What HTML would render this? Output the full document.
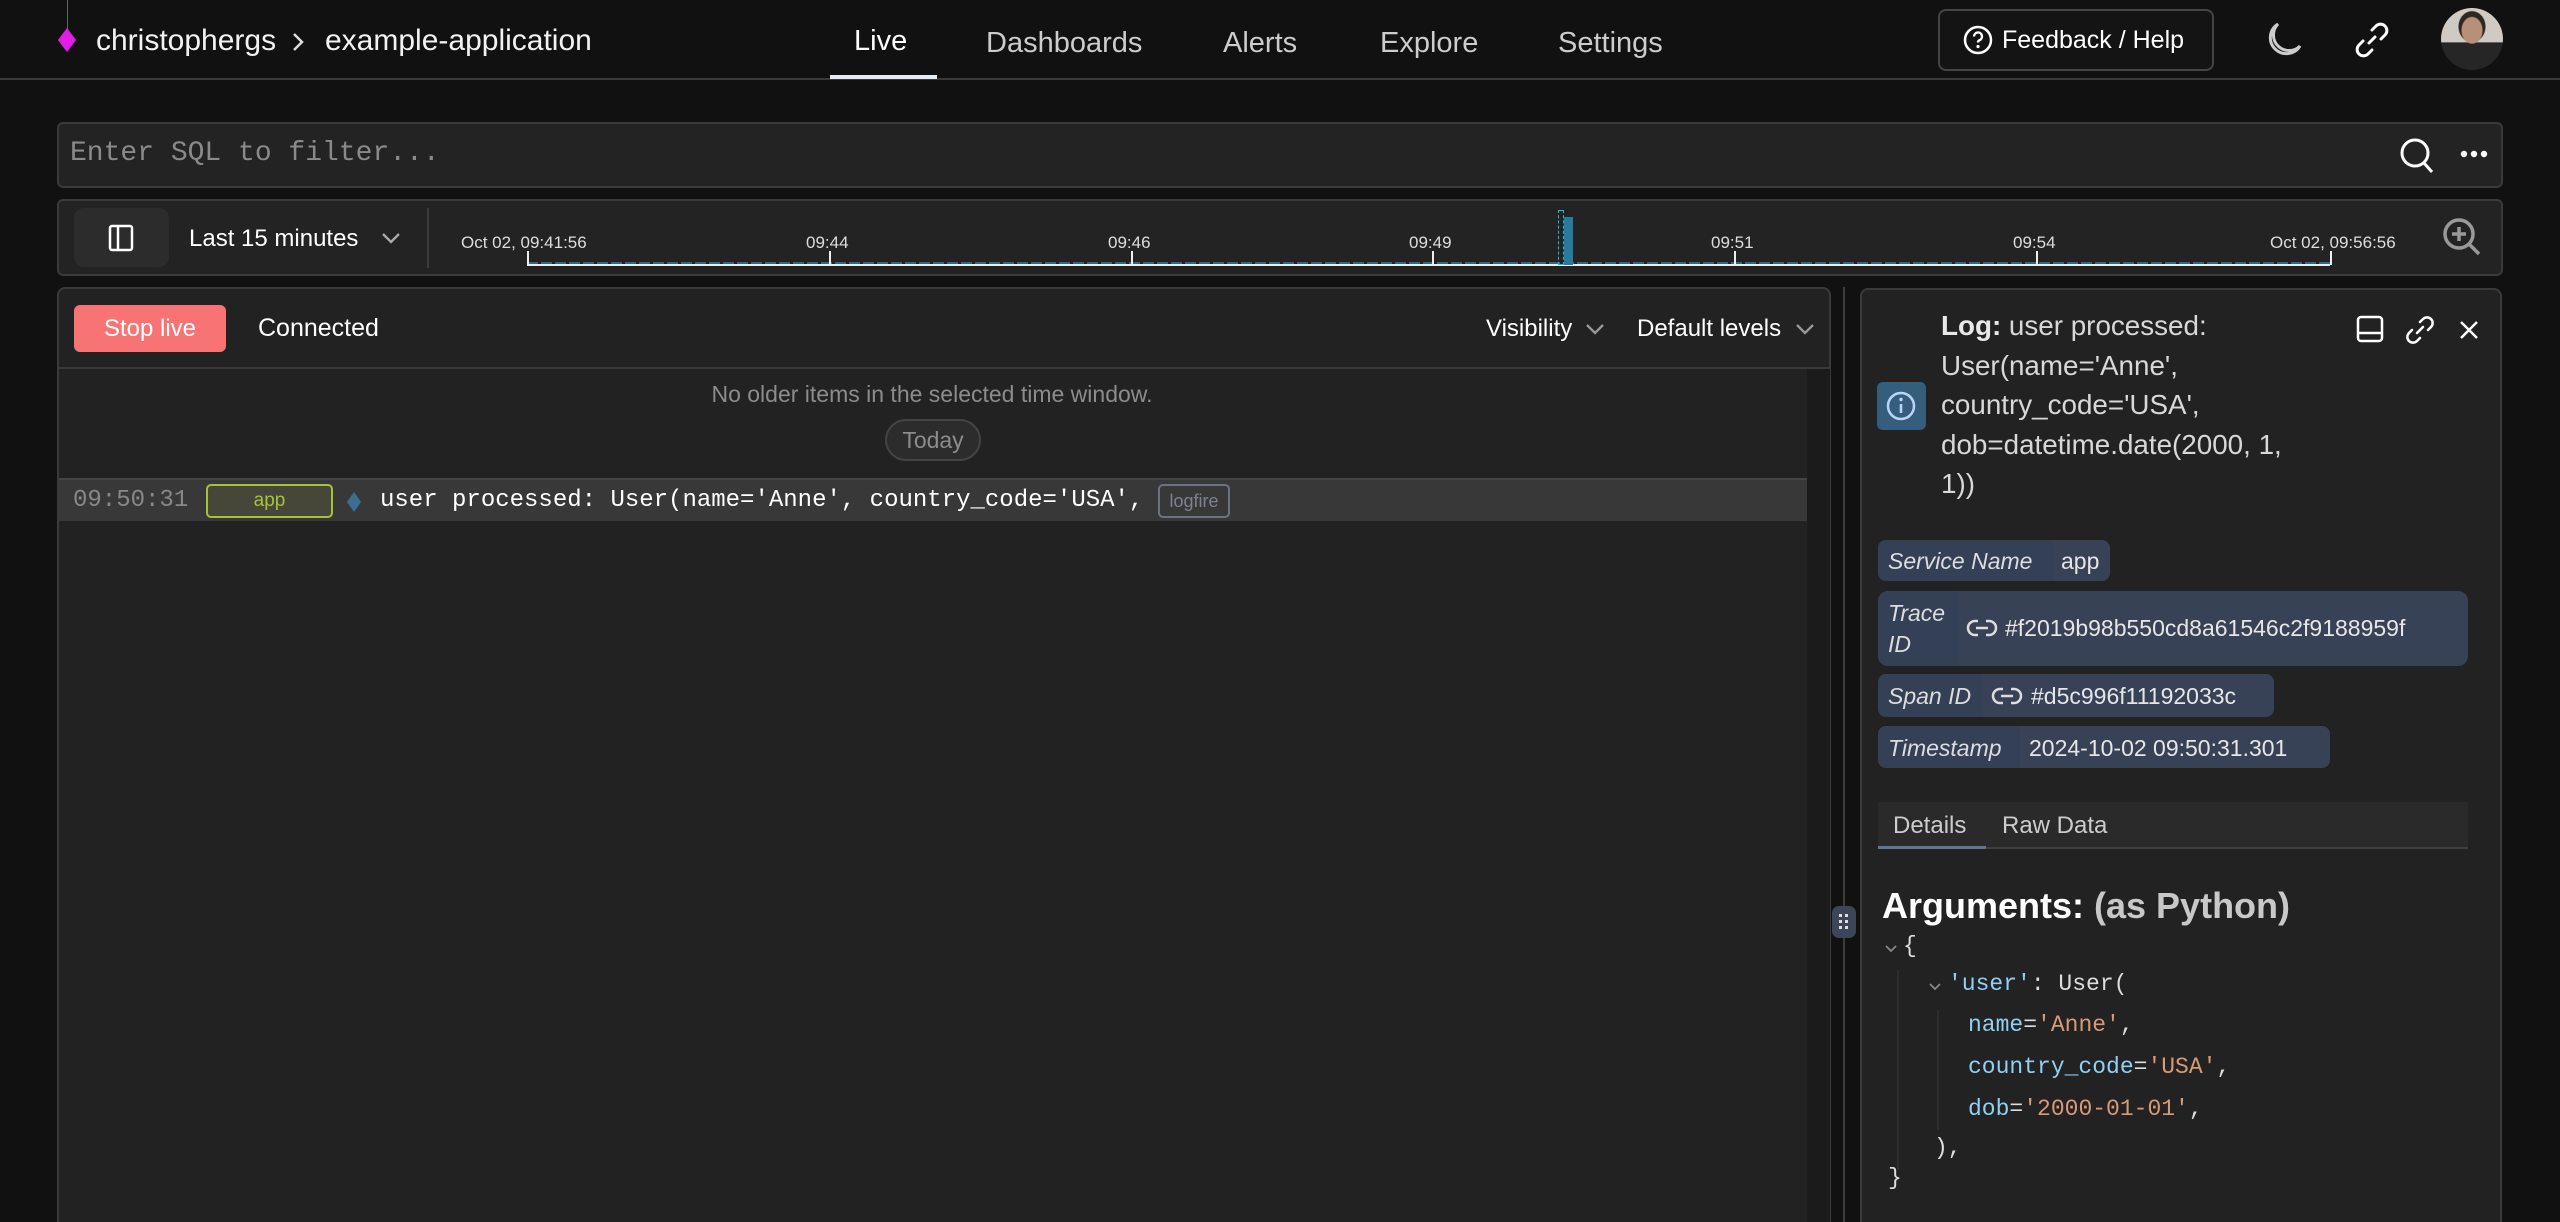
<!DOCTYPE html>
<html style="overflow:hidden;width:2560px;height:1222px"><head><meta charset="utf-8">
<style>
*{box-sizing:border-box;margin:0;padding:0}
body{width:2560px;height:1222px;background:#111;color:#eee;font-family:"Liberation Sans",sans-serif;position:relative;overflow:hidden}
.a{position:absolute;white-space:nowrap}
.mono{font-family:"Liberation Mono","DejaVu Sans Mono",monospace}
svg{position:absolute;overflow:visible}
</style></head><body>
<!-- header -->
<div class="a" style="left:0;top:0;width:2560px;height:80px;background:#111;border-bottom:2px solid #3a3a3a"></div>
<div class="a" style="left:67px;top:0;width:1px;height:30px;background:#666"></div>
<div class="a" style="left:58px;top:28px;width:18px;height:24px;background:#e21de8;clip-path:polygon(50% 0,100% 50%,50% 100%,0 50%)"></div>
<div class="a" style="left:96px;top:24px;font-size:30px;color:#f2f2f2">christophergs</div>
<svg style="left:291px;top:31px" width="14" height="22"><path d="M3 3 L11 11 L3 19" stroke="#ddd" stroke-width="2.5" fill="none"/></svg>
<div class="a" style="left:325px;top:24px;font-size:30px;color:#f2f2f2">example-application</div>
<div class="a" style="left:854px;top:25px;font-size:29px;color:#fff">Live</div>
<div class="a" style="left:830px;top:75px;width:107px;height:4px;background:#e6ecf3"></div>
<div class="a" style="left:986px;top:27px;font-size:29px;color:#ccc">Dashboards</div>
<div class="a" style="left:1223px;top:27px;font-size:29px;color:#ccc">Alerts</div>
<div class="a" style="left:1380px;top:27px;font-size:29px;color:#ccc">Explore</div>
<div class="a" style="left:1558px;top:27px;font-size:29px;color:#ccc">Settings</div>
<div class="a" style="left:1938px;top:9px;width:276px;height:62px;border:2px solid #444;border-radius:8px;background:#141414"></div>
<svg style="left:1963px;top:25px" width="30" height="30"><circle cx="15" cy="15" r="13" stroke="#fff" stroke-width="2.5" fill="none"/><path d="M11 11.5a4 4 0 1 1 5.5 3.7c-1 .5-1.5 1.2-1.5 2.3" stroke="#fff" stroke-width="2.4" fill="none"/><circle cx="15" cy="21.5" r="1.6" fill="#fff"/></svg>
<div class="a" style="left:2002px;top:26px;font-size:25px;color:#fff">Feedback / Help</div>
<svg style="left:2264px;top:20px" width="40" height="40"><path d="M14 4 A16 16 0 1 0 36 26 A13 13 0 0 1 14 4 Z" stroke="#ccc" stroke-width="3" fill="none"/></svg>
<svg style="left:2352px;top:20px" width="40" height="40"><path d="M17 23 L23 17 M20 10 l4-4 a6 6 0 0 1 9 9 l-4 4 M20 30 l-4 4 a6 6 0 0 1 -9 -9 l4 -4" stroke="#fff" stroke-width="3" fill="none" stroke-linecap="round"/></svg>
<div class="a" style="left:2441px;top:8px;width:62px;height:62px;border-radius:50%;background:radial-gradient(ellipse 11px 14px at 50% 36%,#b89078 0 10px,transparent 11px),radial-gradient(ellipse 14px 16px at 50% 30%,#2e2622 0 13px,transparent 14px),linear-gradient(#cfcac3 0 55%,#262626 56%);overflow:hidden"></div>
<!-- SQL bar -->
<div class="a" style="left:57px;top:122px;width:2446px;height:66px;background:#232323;border:2px solid #3a3a3a;border-radius:6px"></div>
<div class="a mono" style="left:70px;top:138px;font-size:28px;color:#8a8a8a">Enter SQL to filter...</div>
<svg style="left:2399px;top:137px" width="36" height="38"><circle cx="16" cy="16" r="13" stroke="#fff" stroke-width="3" fill="none"/><path d="M25 26 L33 35" stroke="#fff" stroke-width="3"/></svg>
<svg style="left:2460px;top:150px" width="30" height="8"><circle cx="4" cy="4" r="3.2" fill="#fff"/><circle cx="14" cy="4" r="3.2" fill="#fff"/><circle cx="24" cy="4" r="3.2" fill="#fff"/></svg>
<!-- timeline -->
<div class="a" style="left:57px;top:199px;width:2446px;height:77px;background:#232323;border:2px solid #3a3a3a;border-radius:6px"></div>
<div class="a" style="left:74px;top:208px;width:95px;height:59px;background:#2c2c2c;border-radius:10px"></div>
<svg style="left:108px;top:224px" width="28" height="28"><rect x="2" y="2" width="22" height="24" rx="2" stroke="#fff" stroke-width="2.5" fill="none"/><path d="M10 2 V26" stroke="#fff" stroke-width="2.5"/></svg>
<div class="a" style="left:189px;top:225px;font-size:24px;color:#fff">Last 15 minutes</div>
<svg style="left:381px;top:231px" width="20" height="14"><path d="M2 3 L10 11 L18 3" stroke="#aaa" stroke-width="2.3" fill="none"/></svg>
<div class="a" style="left:427px;top:208px;width:2px;height:60px;background:#3c3c3c"></div>
<div class="a" style="left:527px;top:262px;width:1803px;height:3px;background:repeating-linear-gradient(90deg,#2a6a8a 0 11px,transparent 11px 14px)"></div>
<div class="a" style="left:527px;top:264px;width:1803px;height:2px;background:#eee"></div>
<div class="a" style="left:1558px;top:210px;width:6px;height:55px;border:1.5px dashed #22b8d8"></div>
<div class="a" style="left:1564px;top:217px;width:9px;height:48px;background:#2a7aa0"></div>
<div class="a" style="left:461px;top:233px;font-size:17px;color:#ddd">Oct 02, 09:41:56</div>
<div class="a" style="left:527px;top:251px;width:2px;height:14px;background:#eee"></div>
<div class="a" style="left:806px;top:233px;font-size:17px;color:#ddd">09:44</div><div class="a" style="left:829px;top:251px;width:2px;height:14px;background:#eee"></div>
<div class="a" style="left:1108px;top:233px;font-size:17px;color:#ddd">09:46</div><div class="a" style="left:1131px;top:251px;width:2px;height:14px;background:#eee"></div>
<div class="a" style="left:1409px;top:233px;font-size:17px;color:#ddd">09:49</div><div class="a" style="left:1432px;top:251px;width:2px;height:14px;background:#eee"></div>
<div class="a" style="left:1711px;top:233px;font-size:17px;color:#ddd">09:51</div><div class="a" style="left:1734px;top:251px;width:2px;height:14px;background:#eee"></div>
<div class="a" style="left:2013px;top:233px;font-size:17px;color:#ddd">09:54</div><div class="a" style="left:2036px;top:251px;width:2px;height:14px;background:#eee"></div>
<div class="a" style="left:2270px;top:233px;font-size:17px;color:#ddd">Oct 02, 09:56:56</div><div class="a" style="left:2330px;top:251px;width:2px;height:14px;background:#eee"></div>
<svg style="left:2442px;top:217px" width="42" height="42"><circle cx="17" cy="17" r="14" stroke="#999" stroke-width="3.5" fill="none"/><path d="M17 10 V24 M10 17 H24 M27 27 L37 37" stroke="#999" stroke-width="3.5"/></svg>
<!-- left panel -->
<div class="a" style="left:57px;top:287px;width:1774px;height:935px;background:#222;border:2px solid #3a3a3a;border-bottom:none;border-radius:8px 8px 0 0"></div>
<div class="a" style="left:59px;top:367px;width:1771px;height:2px;background:#3a3a3a"></div>
<div class="a" style="left:1807px;top:369px;width:23px;height:853px;background:#1b1b1b"></div>
<div class="a" style="left:74px;top:305px;width:152px;height:47px;background:#f87373;border-radius:6px;color:#fff;font-size:24px;text-align:center;line-height:47px">Stop live</div>
<div class="a" style="left:258px;top:314px;font-size:25px;color:#fff">Connected</div>
<div class="a" style="left:1486px;top:315px;font-size:24px;color:#fff">Visibility</div>
<svg style="left:1585px;top:322px" width="20" height="14"><path d="M2 3 L10 11 L18 3" stroke="#999" stroke-width="2.3" fill="none"/></svg>
<div class="a" style="left:1637px;top:315px;font-size:24px;color:#fff">Default levels</div>
<svg style="left:1795px;top:322px" width="20" height="14"><path d="M2 3 L10 11 L18 3" stroke="#999" stroke-width="2.3" fill="none"/></svg>
<div class="a" style="left:0;width:1864px;top:381px;text-align:center;font-size:23px;color:#8c8c8c">No older items in the selected time window.</div>
<div class="a" style="left:885px;top:419px;width:96px;height:42px;border:2px solid #444;border-radius:21px;background:#2c2c2c;color:#8c8c8c;font-size:23px;text-align:center;line-height:38px">Today</div>
<div class="a" style="left:59px;top:478px;width:1748px;height:43px;background:#383838;border-top:2px solid #444"></div>
<div class="a mono" style="left:73px;top:487px;font-size:24px;color:#888">09:50:31</div>
<div class="a" style="left:206px;top:484px;width:127px;height:34px;border:2px solid #a6c23b;border-radius:5px;background:#474739;color:#a6c23b;font-size:19px;text-align:center;line-height:30px">app</div>
<div class="a" style="left:347px;top:492px;width:14px;height:20px;background:#3b6f91;clip-path:polygon(50% 0,100% 50%,50% 100%,0 50%)"></div>
<div class="a mono" style="left:380px;top:487px;font-size:24px;color:#fff">user processed: User(name='Anne', country_code='USA',</div>
<div class="a" style="left:1158px;top:484px;width:72px;height:34px;border:2px solid #6b7380;border-radius:5px;color:#7b8290;font-size:18px;text-align:center;line-height:30px">logfire</div>
<!-- divider -->
<div class="a" style="left:1843px;top:287px;width:2px;height:935px;background:#3c3c3c"></div>
<div class="a" style="left:1832px;top:906px;width:24px;height:32px;background:#3c4658;border-radius:7px"></div>
<svg style="left:1839px;top:913px" width="10" height="16"><g fill="#ddd"><rect x="0" y="1" width="3" height="3"/><rect x="6" y="1" width="3" height="3"/><rect x="0" y="7" width="3" height="3"/><rect x="6" y="7" width="3" height="3"/><rect x="0" y="13" width="3" height="3"/><rect x="6" y="13" width="3" height="3"/></g></svg>
<!-- right panel -->
<div class="a" style="left:1860px;top:288px;width:642px;height:934px;background:#222;border:2px solid #3a3a3a;border-bottom:none;border-radius:8px 8px 0 0"></div>
<div class="a" style="left:1877px;top:382px;width:49px;height:48px;background:#355e7c;border-radius:6px"></div>
<svg style="left:1885px;top:390px" width="34" height="34"><circle cx="16" cy="16" r="13" stroke="#b8d4f8" stroke-width="2.5" fill="none"/><path d="M16 14 V23" stroke="#b8d4f8" stroke-width="2.6"/><circle cx="16" cy="9.5" r="1.7" fill="#b8d4f8"/></svg>
<div class="a" style="left:1941px;top:306px;font-size:27.8px;line-height:39.5px;color:#d8d8d8;white-space:normal;width:440px"><b style="color:#e8e8e8">Log:</b> user processed:<br>User(name='Anne',<br>country_code='USA',<br>dob=datetime.date(2000, 1,<br>1))</div>
<svg style="left:2356px;top:315px" width="28" height="28"><rect x="2" y="2" width="24" height="24" rx="3" stroke="#fff" stroke-width="2.5" fill="none"/><path d="M2 18 H26" stroke="#fff" stroke-width="2.5"/></svg>
<svg style="left:2404px;top:314px" width="32" height="32"><path d="M13 19 L19 13 M16 8 l3-3 a5 5 0 0 1 8 8 l-3 3 M16 24 l-3 3 a5 5 0 0 1 -8 -8 l3 -3" stroke="#fff" stroke-width="2.5" fill="none" stroke-linecap="round"/></svg>
<svg style="left:2459px;top:320px" width="20" height="20"><path d="M2 2 L18 18 M18 2 L2 18" stroke="#fff" stroke-width="2.5"/></svg>
<!-- chips -->
<div class="a" style="left:1878px;top:540px;width:232px;height:41px;border-radius:8px;background:#374257;overflow:hidden">
<div class="a" style="left:0;top:0;width:175px;height:41px;background:#334055"></div>
<div class="a" style="left:10px;top:8px;font-size:23px;font-style:italic;color:#ddd">Service Name</div>
<div class="a" style="left:183px;top:8px;font-size:23px;color:#e6e6e6">app</div></div>
<div class="a" style="left:1878px;top:591px;width:590px;height:75px;border-radius:10px;background:#374257;overflow:hidden">
<div class="a" style="left:0;top:0;width:80px;height:75px;background:#334055"></div>
<div class="a" style="left:10px;top:7px;font-size:23px;line-height:31px;font-style:italic;color:#ddd;white-space:normal">Trace<br>ID</div>
<svg style="left:89px;top:27px" width="30" height="20"><path d="M11 3 H8 a7 7 0 0 0 0 14 H11 M19 3 H22 a7 7 0 0 1 0 14 H19 M9 10 H21" stroke="#ddd" stroke-width="2.5" fill="none"/></svg>
<div class="a" style="left:127px;top:24px;font-size:23px;color:#e6e6e6">#f2019b98b550cd8a61546c2f9188959f</div></div>
<div class="a" style="left:1878px;top:674px;width:396px;height:43px;border-radius:8px;background:#374257;overflow:hidden">
<div class="a" style="left:0;top:0;width:105px;height:43px;background:#334055"></div>
<div class="a" style="left:10px;top:9px;font-size:23px;font-style:italic;color:#ddd">Span ID</div>
<svg style="left:114px;top:12px" width="30" height="20"><path d="M11 3 H8 a7 7 0 0 0 0 14 H11 M19 3 H22 a7 7 0 0 1 0 14 H19 M9 10 H21" stroke="#ddd" stroke-width="2.5" fill="none"/></svg>
<div class="a" style="left:153px;top:9px;font-size:23px;color:#e6e6e6">#d5c996f11192033c</div></div>
<div class="a" style="left:1878px;top:726px;width:452px;height:42px;border-radius:8px;background:#374257;overflow:hidden">
<div class="a" style="left:0;top:0;width:142px;height:42px;background:#334055"></div>
<div class="a" style="left:10px;top:9px;font-size:23px;font-style:italic;color:#ddd">Timestamp</div>
<div class="a" style="left:151px;top:9px;font-size:23px;color:#e6e6e6">2024-10-02 09:50:31.301</div></div>
<!-- tabs -->
<div class="a" style="left:1878px;top:802px;width:590px;height:47px;background:#2a2a2a;border-bottom:2px solid #3e3e3e"></div>
<div class="a" style="left:1878px;top:846px;width:108px;height:3px;background:#5f7591"></div>
<div class="a" style="left:1893px;top:812px;font-size:24px;color:#ccc">Details</div>
<div class="a" style="left:2002px;top:812px;font-size:24px;color:#ccc">Raw Data</div>
<div class="a" style="left:1882px;top:885px;font-size:36px;font-weight:bold;color:#fff">Arguments: <span style="color:#c8c8c8">(as Python)</span></div>
<!-- code -->
<div class="a" style="left:1897px;top:970px;width:2px;height:200px;background:#2e2e2e"></div>
<div class="a" style="left:1937px;top:1010px;width:2px;height:120px;background:#2e2e2e"></div>
<svg style="left:1884px;top:944px" width="14" height="10"><path d="M2 2 L7 7 L12 2" stroke="#888" stroke-width="1.8" fill="none"/></svg>
<svg style="left:1928px;top:982px" width="14" height="10"><path d="M2 2 L7 7 L12 2" stroke="#888" stroke-width="1.8" fill="none"/></svg>
<div class="mono a" style="left:1903px;top:933px;font-size:23px;color:#ddd">{</div>
<div class="mono a" style="left:1948px;top:971px;font-size:23px;color:#ddd"><span style="color:#8fd0f5">'user'</span>: User(</div>
<div class="mono a" style="left:1968px;top:1012px;font-size:23px;color:#ddd"><span style="color:#8fd0f5">name</span>=<span style="color:#d79a76">'Anne'</span>,</div>
<div class="mono a" style="left:1968px;top:1054px;font-size:23px;color:#ddd"><span style="color:#8fd0f5">country_code</span>=<span style="color:#d79a76">'USA'</span>,</div>
<div class="mono a" style="left:1968px;top:1096px;font-size:23px;color:#ddd"><span style="color:#8fd0f5">dob</span>=<span style="color:#d79a76">'2000-01-01'</span>,</div>
<div class="mono a" style="left:1934px;top:1135px;font-size:23px;color:#ddd">),</div>
<div class="mono a" style="left:1888px;top:1165px;font-size:23px;color:#ddd">}</div>
</body></html>
